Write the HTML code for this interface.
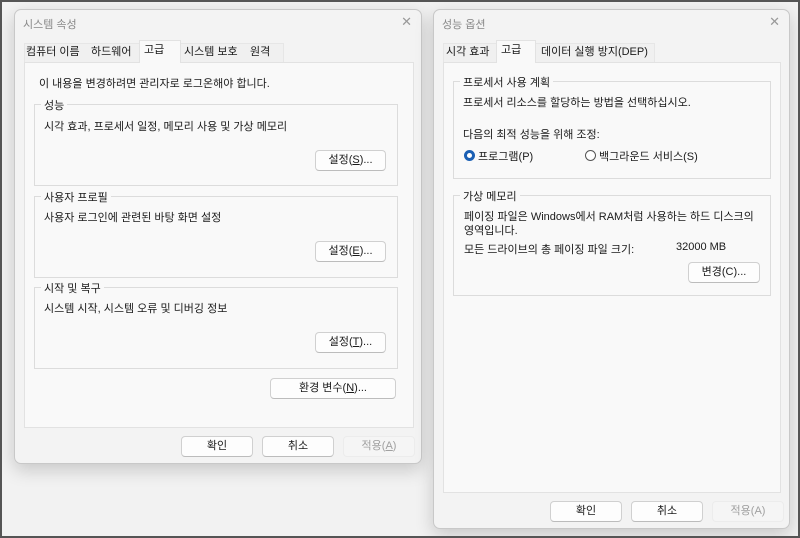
<!DOCTYPE html><html><head><meta charset="utf-8"><style>
*{box-sizing:border-box;margin:0;padding:0}
body{width:800px;height:538px;background:#f2f2f2;position:relative;overflow:hidden;font-family:"Liberation Sans","Noto Sans CJK KR",sans-serif;font-size:11px;color:#1a1a1a}
.frame{position:absolute;left:0;top:0;width:800px;height:538px;border:2px solid #555;z-index:10;pointer-events:none}
.a{position:absolute;white-space:nowrap}
.win{position:absolute;background:#f3f3f3;border:1px solid #c8c8c8;border-radius:7px;box-shadow:0 6px 18px rgba(0,0,0,.18)}
.panel{position:absolute;background:#f9f9f9;border:1px solid #e2e2e2}
.grp{position:absolute;border:1px solid #dcdcdc}
.lg{position:absolute;top:-8px;left:6px;background:#f9f9f9;padding:0 3px}
.btn{position:absolute;background:#fdfdfd;border:1px solid #d0d0d0;border-bottom-color:#bcbcbc;border-radius:4px;text-align:center;line-height:19px;height:21px}
.dis{background:#f5f5f5;border-color:#ececec;color:#a0a0a0}
.strip{position:absolute;top:33px;height:19px;background:#f0f0f0;border:1px solid #e6e6e6;border-bottom:none}
.tab{position:absolute;top:33px;height:19px;line-height:19px;padding:0 4px}
.sel{background:#f9f9f9;border:1px solid #e2e2e2;border-bottom:none;height:23px;top:30px;line-height:18px;z-index:2}
.tt{color:#888;font-size:11px}
.x{position:absolute;color:#999;font-size:13px}
</style></head><body>
<div class="frame"></div>

<div class="win" style="left:14px;top:9px;width:408px;height:455px">
<div class="a tt" style="left:8px;top:6px">시스템 속성</div>
<div class="x" style="right:9px;top:4px">✕</div>
<div class="panel" style="left:9px;top:52px;width:390px;height:366px"></div>
<div class="strip" style="left:9px;width:260px"></div>
<div class="tab" style="left:7px">컴퓨터 이름</div>
<div class="tab" style="left:72px">하드웨어</div>
<div class="tab" style="left:165px">시스템 보호</div>
<div class="tab" style="left:231px">원격</div>
<div class="tab sel" style="left:124px;width:42px">고급</div>
<div class="a" style="left:24px;top:65px">이 내용을 변경하려면 관리자로 로그온해야 합니다.</div>
<div class="grp" style="left:19px;top:94px;width:364px;height:82px"><div class="lg">성능</div>
<div class="a" style="left:9px;top:13px">시각 효과, 프로세서 일정, 메모리 사용 및 가상 메모리</div></div>
<div class="btn" style="left:300px;top:140px;width:71px">설정(<u>S</u>)...</div>
<div class="grp" style="left:19px;top:186px;width:364px;height:82px"><div class="lg">사용자 프로필</div>
<div class="a" style="left:9px;top:12px">사용자 로그인에 관련된 바탕 화면 설정</div></div>
<div class="btn" style="left:300px;top:231px;width:71px">설정(<u>E</u>)...</div>
<div class="grp" style="left:19px;top:277px;width:364px;height:82px"><div class="lg">시작 및 복구</div>
<div class="a" style="left:9px;top:12px">시스템 시작, 시스템 오류 및 디버깅 정보</div></div>
<div class="btn" style="left:300px;top:322px;width:71px">설정(<u>T</u>)...</div>
<div class="btn" style="left:255px;top:368px;width:126px">환경 변수(<u>N</u>)...</div>
<div class="btn" style="left:166px;top:426px;width:72px">확인</div>
<div class="btn" style="left:247px;top:426px;width:72px">취소</div>
<div class="btn dis" style="left:328px;top:426px;width:72px">적용(<u>A</u>)</div>
</div>

<div class="win" style="left:433px;top:9px;width:357px;height:520px">
<div class="a tt" style="left:8px;top:6px">성능 옵션</div>
<div class="x" style="right:9px;top:4px">✕</div>
<div class="panel" style="left:9px;top:52px;width:338px;height:431px"></div>
<div class="strip" style="left:9px;width:212px"></div>
<div class="tab" style="left:8px">시각 효과</div>
<div class="tab" style="left:103px">데이터 실행 방지(DEP)</div>
<div class="tab sel" style="left:62px;width:40px">고급</div>
<div class="grp" style="left:19px;top:71px;width:318px;height:98px"><div class="lg">프로세서 사용 계획</div>
<div class="a" style="left:9px;top:12px">프로세서 리소스를 할당하는 방법을 선택하십시오.</div>
<div class="a" style="left:9px;top:44px">다음의 최적 성능을 위해 조정:</div>
<div class="a" style="left:10px;top:66px"><span style="display:inline-block;width:11px;height:11px;border-radius:50%;border:3px solid #1a5fb4;vertical-align:-1px;background:#fff"></span> 프로그램(P)</div>
<div class="a" style="left:131px;top:66px"><span style="display:inline-block;width:11px;height:11px;border-radius:50%;border:1px solid #555;vertical-align:-1px;background:#fff"></span> 백그라운드 서비스(S)</div></div>
<div class="grp" style="left:19px;top:185px;width:318px;height:101px"><div class="lg">가상 메모리</div>
<div class="a" style="left:10px;top:12px">페이징 파일은 Windows에서 RAM처럼 사용하는 하드 디스크의</div>
<div class="a" style="left:10px;top:26px">영역입니다.</div>
<div class="a" style="left:10px;top:45px">모든 드라이브의 총 페이징 파일 크기:</div>
<div class="a" style="left:222px;top:45px">32000 MB</div></div>
<div class="btn" style="left:254px;top:252px;width:72px">변경(C)...</div>
<div class="btn" style="left:116px;top:491px;width:72px">확인</div>
<div class="btn" style="left:197px;top:491px;width:72px">취소</div>
<div class="btn dis" style="left:278px;top:491px;width:72px">적용(A)</div>
</div>
</body></html>
